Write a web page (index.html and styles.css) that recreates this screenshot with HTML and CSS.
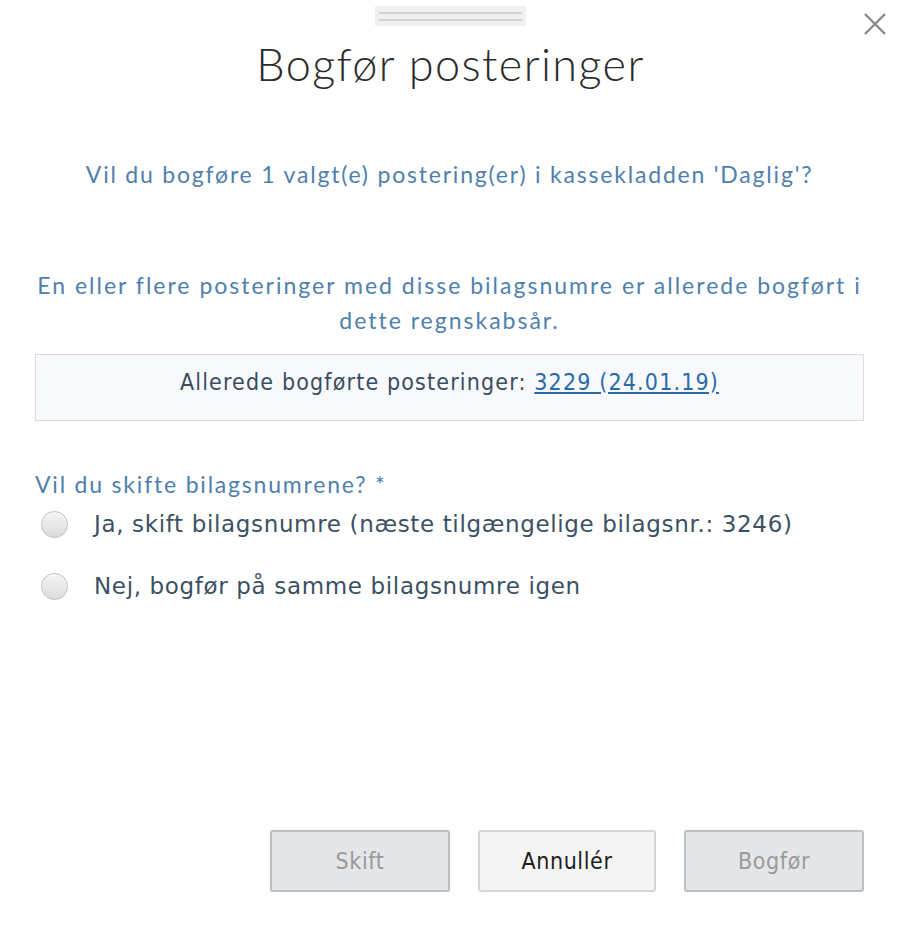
FILE: index.html
```html
<!DOCTYPE html>
<html lang="da">
<head>
<meta charset="utf-8">
<title>Bogfør posteringer</title>
<link rel="stylesheet" href="styles.css">
</head>
<body>
<div class="dialog">
  <div class="handle"><span></span><span></span></div>
  <button class="close" aria-label="Luk">
    <svg width="24" height="24" viewBox="0 0 24 24"><path d="M2 2 L22 22 M22 2 L2 22" stroke="#8a8a8a" stroke-width="2.4" fill="none"/></svg>
  </button>
  <h1 class="title">Bogfør posteringer</h1>
  <p class="question">Vil du bogføre 1 valgt(e) postering(er) i kassekladden 'Daglig'?</p>
  <p class="warning">En eller flere posteringer med disse bilagsnumre er allerede bogført i dette regnskabsår.</p>
  <div class="info-box">Allerede bogførte posteringer: <a href="#" class="link">3229 (24.01.19)</a></div>
  <div class="field-label">Vil du skifte bilagsnumrene? *</div>
  <label class="radio-row"><span class="radio"></span><span class="radio-text">Ja, skift bilagsnumre (næste tilgængelige bilagsnr.: 3246)</span></label>
  <label class="radio-row"><span class="radio"></span><span class="radio-text">Nej, bogfør på samme bilagsnumre igen</span></label>
  <div class="actions">
    <button class="btn btn-disabled">Skift</button>
    <button class="btn btn-default">Annullér</button>
    <button class="btn btn-disabled">Bogfør</button>
  </div>
</div>
</body>
</html>
```
FILE: styles.css
```css
html, body {
  margin: 0;
  padding: 0;
  background: #fff;
}
.dialog {
  position: relative;
  height: 930px;
  box-sizing: border-box;
  padding: 6px 36px 38px 35px;
  display: flex;
  flex-direction: column;
  font-family: Lato, "Open Sans", sans-serif;
}
.handle {
  align-self: center;
  width: 151px;
  height: 20px;
  margin-left: 1px;
  background: #f0f0f0;
  display: flex;
  flex-direction: column;
  justify-content: center;
  gap: 5px;
  padding: 0 4px;
  box-sizing: border-box;
}
.handle span {
  display: block;
  height: 2px;
  background: #d2d2d2;
}
.close {
  position: absolute;
  top: 12px;
  right: 13px;
  border: 0;
  background: none;
  padding: 0;
  width: 24px;
  height: 24px;
  cursor: pointer;
}
.title {
  margin: 10px 0 0;
  text-align: center;
  font-family: Lato, sans-serif;
  font-weight: 300;
  font-size: 45px;
  letter-spacing: 1.4px;
  line-height: 56px;
  color: #2b2b2b;
  padding-left: 2px;
}
.question {
  margin: 66px 0 0;
  text-align: center;
  font-size: 23px;
  letter-spacing: 1.8px;
  line-height: 32px;
  color: #4f80ad;
}
.warning {
  margin: 78px 0 0;
  text-align: center;
  font-size: 23px;
  letter-spacing: 2px;
  line-height: 35px;
  color: #4f80ad;
  padding: 0;
}
.info-box {
  margin-top: 16px;
  height: 67px;
  box-sizing: border-box;
  border: 1px solid #dcdcdc;
  background: #f7f9fc;
  padding-top: 12px;
  text-align: center;
  font-family: "DejaVu Sans Condensed", "DejaVu Sans", sans-serif;
  font-size: 23px;
  letter-spacing: 1.15px;
  line-height: 30px;
  color: #3b4d5e;
}
.link {
  color: #2b6aa8;
  text-decoration: underline;
}
.field-label {
  margin-top: 49px;
  font-size: 23px;
  letter-spacing: 1.8px;
  line-height: 28px;
  color: #4f80ad;
}
.radio-row {
  display: flex;
  align-items: center;
  gap: 26px;
  margin-top: 10px;
  padding-left: 6px;
  height: 32px;
  cursor: pointer;
}
.radio-row + .radio-row {
  margin-top: 30px;
}
.radio {
  width: 27px;
  height: 27px;
  border-radius: 50%;
  box-sizing: border-box;
  border: 1px solid #bdbdbd;
  background: linear-gradient(#f4f4f4, #dcdcdc);
  box-shadow: inset 0 1px 1px rgba(255,255,255,0.8);
  flex: none;
}
.radio-text {
  font-family: "DejaVu Sans", Verdana, sans-serif;
  font-size: 23px;
  letter-spacing: 0.65px;
  color: #3b5163;
}
.actions {
  margin-top: auto;
  display: flex;
  justify-content: flex-end;
  gap: 28px;
}
.btn {
  width: 180px;
  height: 62px;
  border-radius: 3px;
  font-family: "DejaVu Sans Condensed", "DejaVu Sans", sans-serif;
  font-size: 23px;
  letter-spacing: 0.6px;
  cursor: pointer;
}
.btn-disabled {
  background: #e4e7e9;
  border: 2px solid #bcc0c3;
  color: #9a9a9a;
}
.btn-default {
  width: 178px;
  background: #f5f5f5;
  border: 2px solid #d6d6d6;
  color: #1e1e1e;
}
```
